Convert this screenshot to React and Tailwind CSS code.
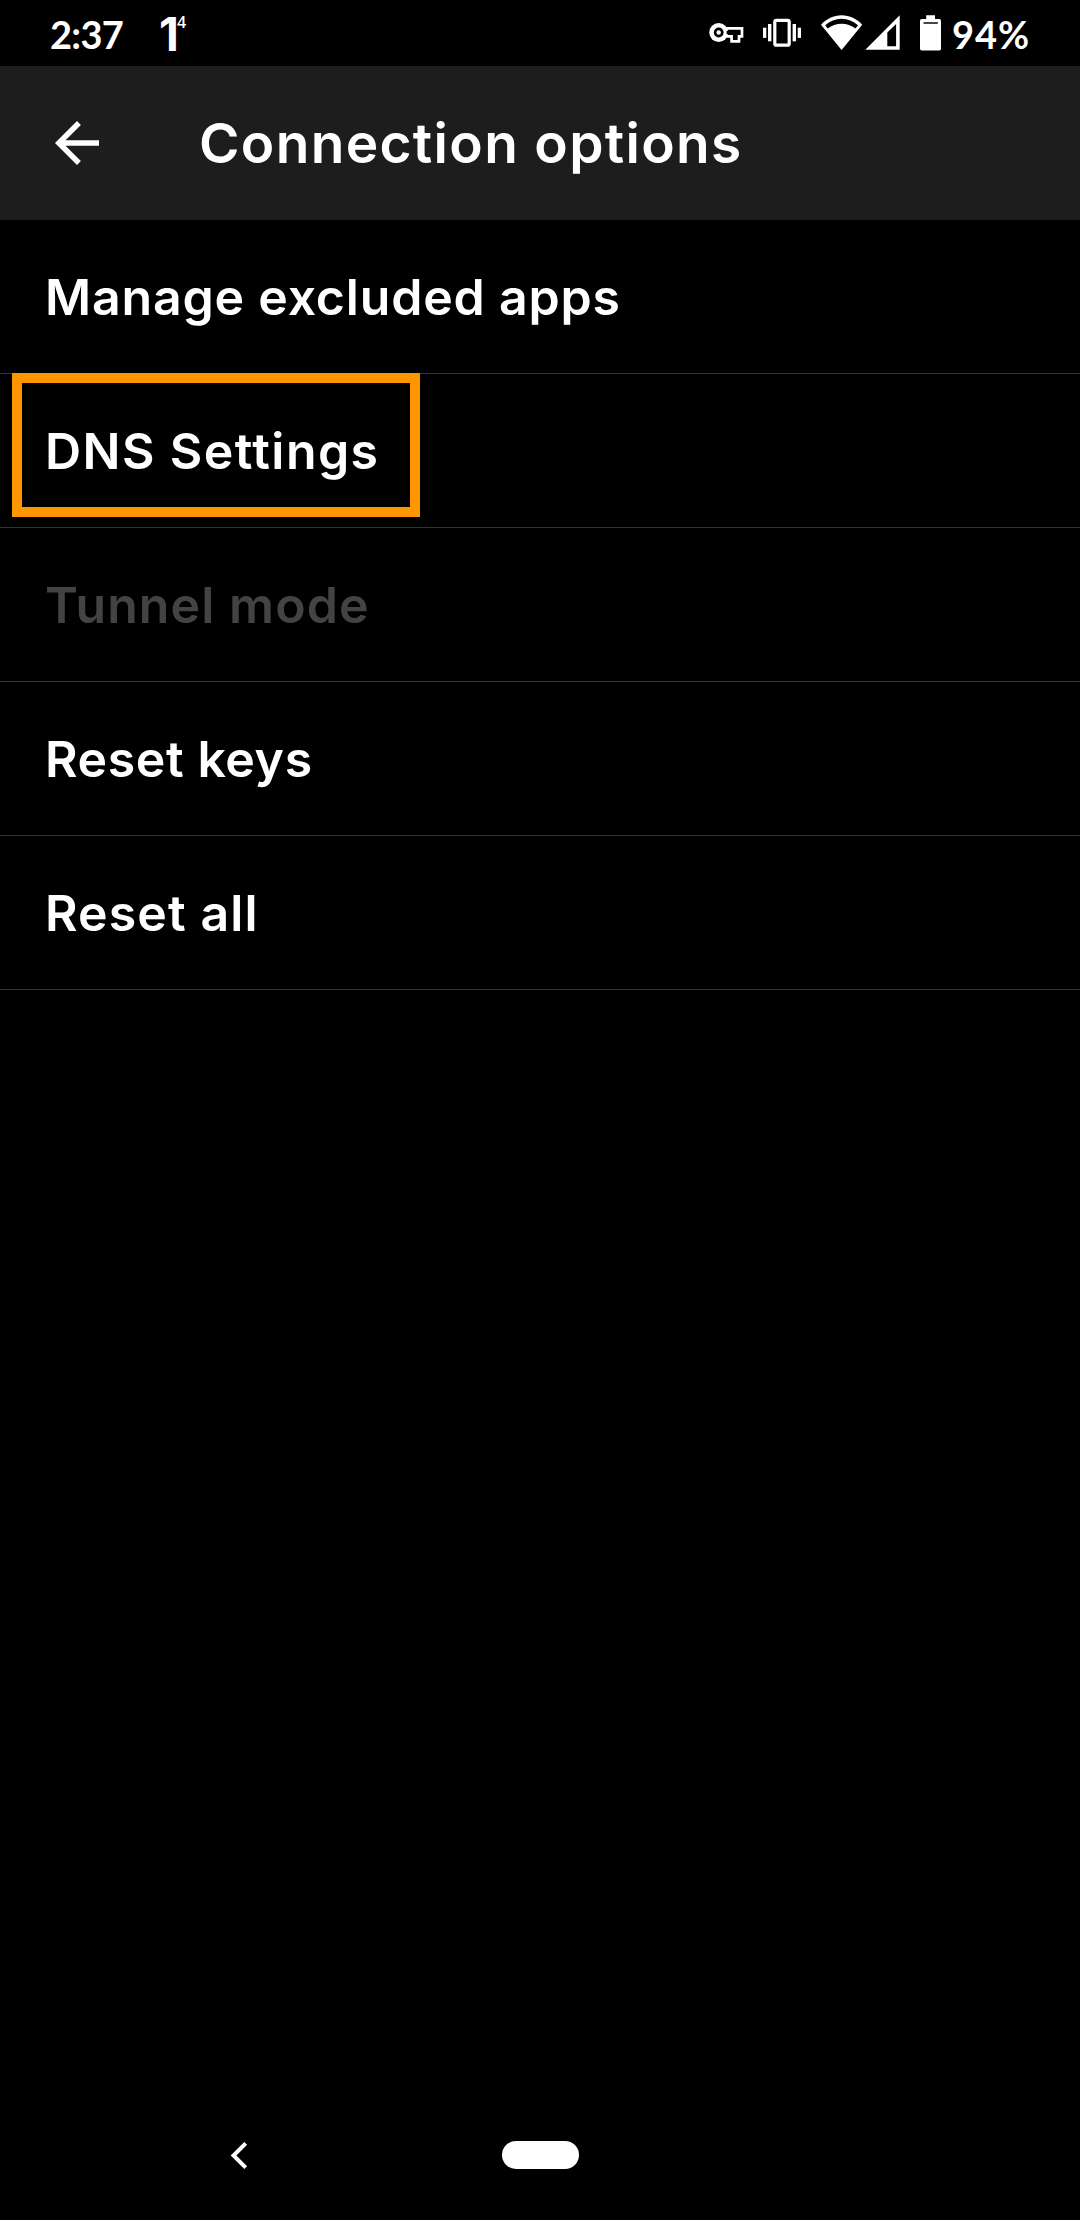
import React from "react";

const items = [
  { label: "Manage excluded apps", tracking: "tracking-[0.82px]" },
  { label: "DNS Settings", tracking: "tracking-[1.42px]", highlighted: true },
  { label: "Tunnel mode", tracking: "tracking-[1.1px]", disabled: true },
  { label: "Reset keys", tracking: "tracking-[0.6px]" },
  { label: "Reset all", tracking: "tracking-[1.1px]" },
];

function KeyIcon() {
  return (
    <svg className="w-[36px] h-[24px]" viewBox="709 21 36 24" fill="none">
      <path d="M726 28.3H742V36.4H739V41.4H731.6V36.4H726" stroke="#fff" strokeWidth="2.7" />
      <circle cx="718.7" cy="32.5" r="9.4" fill="#fff" />
      <circle cx="718.7" cy="32.5" r="4.9" fill="#000" />
      <circle cx="718.7" cy="32.5" r="2.2" fill="#fff" />
      <path d="M726.6 32.4H738.6M735.3 32V38.8" stroke="#000" strokeWidth="3" />
    </svg>
  );
}

function VibrateIcon() {
  return (
    <svg className="w-[40px] h-[30px]" viewBox="762 18 40 30" fill="#fff">
      <rect x="774.8" y="20.4" width="14.4" height="24.8" rx="1.5" fill="none" stroke="#fff" strokeWidth="3.2" />
      <rect x="768" y="24" width="3.4" height="17.3" />
      <rect x="763" y="27.7" width="3.3" height="10.2" />
      <rect x="792.6" y="24" width="3.4" height="17.3" />
      <rect x="797.7" y="27.7" width="3.3" height="10.2" />
    </svg>
  );
}

function WifiIcon() {
  return (
    <svg className="w-[42px] h-[36px]" viewBox="821 15 42 36">
      <path d="M841.6 50L821 24.7C826.4 19 833.5 15.3 841.6 15.3S856.8 19 862.2 24.7Z" fill="#fff" />
      <path d="M825.2 25.3C829.9 21 835.5 18.8 841.6 18.8S853.3 21 858 25.3L855.5 28.5C851.3 25.5 846.8 23.7 841.6 23.7S831.9 25.5 827.7 28.5Z" fill="#000" />
    </svg>
  );
}

function SignalIcon() {
  return (
    <svg className="w-[36px] h-[36px]" viewBox="865 15 36 36">
      <path fillRule="evenodd" d="M865.3 49.7L899.7 15.3V49.7ZM887.3 32.4V46.2H896.1V23.9Z" fill="#fff" />
    </svg>
  );
}

function BatteryIcon() {
  return (
    <svg className="w-[22px] h-[36px]" viewBox="920 15 22 36">
      <path d="M926.2 15.3H935V19H939.3Q941 19 941 20.8V48.8Q941 50.5 939.3 50.5H921.7Q920 50.5 920 48.8V20.8Q920 19 921.7 19H926.2Z" fill="#fff" />
      <path d="M923.5 23H937.8" stroke="#333" strokeWidth="1.8" />
    </svg>
  );
}

function StatusBar() {
  return (
    <div className="h-[66px] flex items-center justify-between pl-[50px] pr-[51px] font-bold font-['Lato',sans-serif]">
      <div className="flex items-center h-full">
        <span className="w-[109px] text-[38px] leading-[66px] pt-[2px] tracking-[-0.7px]">2:37</span>
        <span className="w-[18px] text-[46px] leading-[68px] h-[66px] font-['Inter',sans-serif]">1</span>
        <span className="self-start mt-[14px] text-[16px] leading-[16px] font-semibold font-['Open_Sans',sans-serif]">4</span>
      </div>
      <div className="flex items-center h-full">
        <KeyIcon />
        <div className="ml-[17px]"><VibrateIcon /></div>
        <div className="ml-[19px]"><WifiIcon /></div>
        <div className="ml-[2px]"><SignalIcon /></div>
        <div className="ml-[19px]"><BatteryIcon /></div>
        <span className="ml-[10px] w-[77px] text-[38px] leading-[66px] pt-[2px] tracking-[1px]">94%</span>
      </div>
    </div>
  );
}

function Header() {
  return (
    <header className="h-[154px] bg-[#1d1d1d] flex items-center pl-[44px]">
      <svg className="w-[66px] h-[66px]" viewBox="0 0 24 24" fill="#fff">
        <path d="M20 11H7.83l5.59-5.59L12 4l-8 8 8 8 1.41-1.41L7.83 13H20v-2z" />
      </svg>
      <h1 className="ml-[89px] text-[55px] font-semibold leading-[64px] tracking-[1.33px] whitespace-nowrap">Connection options</h1>
    </header>
  );
}

function Row({ item }) {
  return (
    <li className="relative h-[154px] border-b border-[#333333] flex items-center pt-px pl-[45px]">
      <span className={`text-[50px] font-semibold leading-[64px] whitespace-nowrap ${item.tracking} ${item.disabled ? "text-[#434343]" : "text-white"}`}>
        {item.label}
      </span>
      {item.highlighted && (
        <div className="absolute left-[12px] top-[-1px] w-[408px] h-[144px] border-[10px] border-[#ff9500]" />
      )}
    </li>
  );
}

export default function App() {
  return (
    <div className="w-[1080px] h-[2220px] bg-black text-white flex flex-col font-['Inter',sans-serif] overflow-hidden">
      <StatusBar />
      <Header />
      <ul className="flex-1">
        {items.map((item) => (
          <Row key={item.label} item={item} />
        ))}
      </ul>
      <nav className="h-[131px] flex items-center pl-[229px]">
        <svg className="w-[20px] h-[30px]" viewBox="229 2139 20 30" fill="none">
          <path d="M245.7 2142.3L233.5 2154.5L245.7 2166.7" stroke="#fff" strokeWidth="4" />
        </svg>
        <div className="ml-[253px] w-[77px] h-[28px] rounded-full bg-white" />
      </nav>
    </div>
  );
}
